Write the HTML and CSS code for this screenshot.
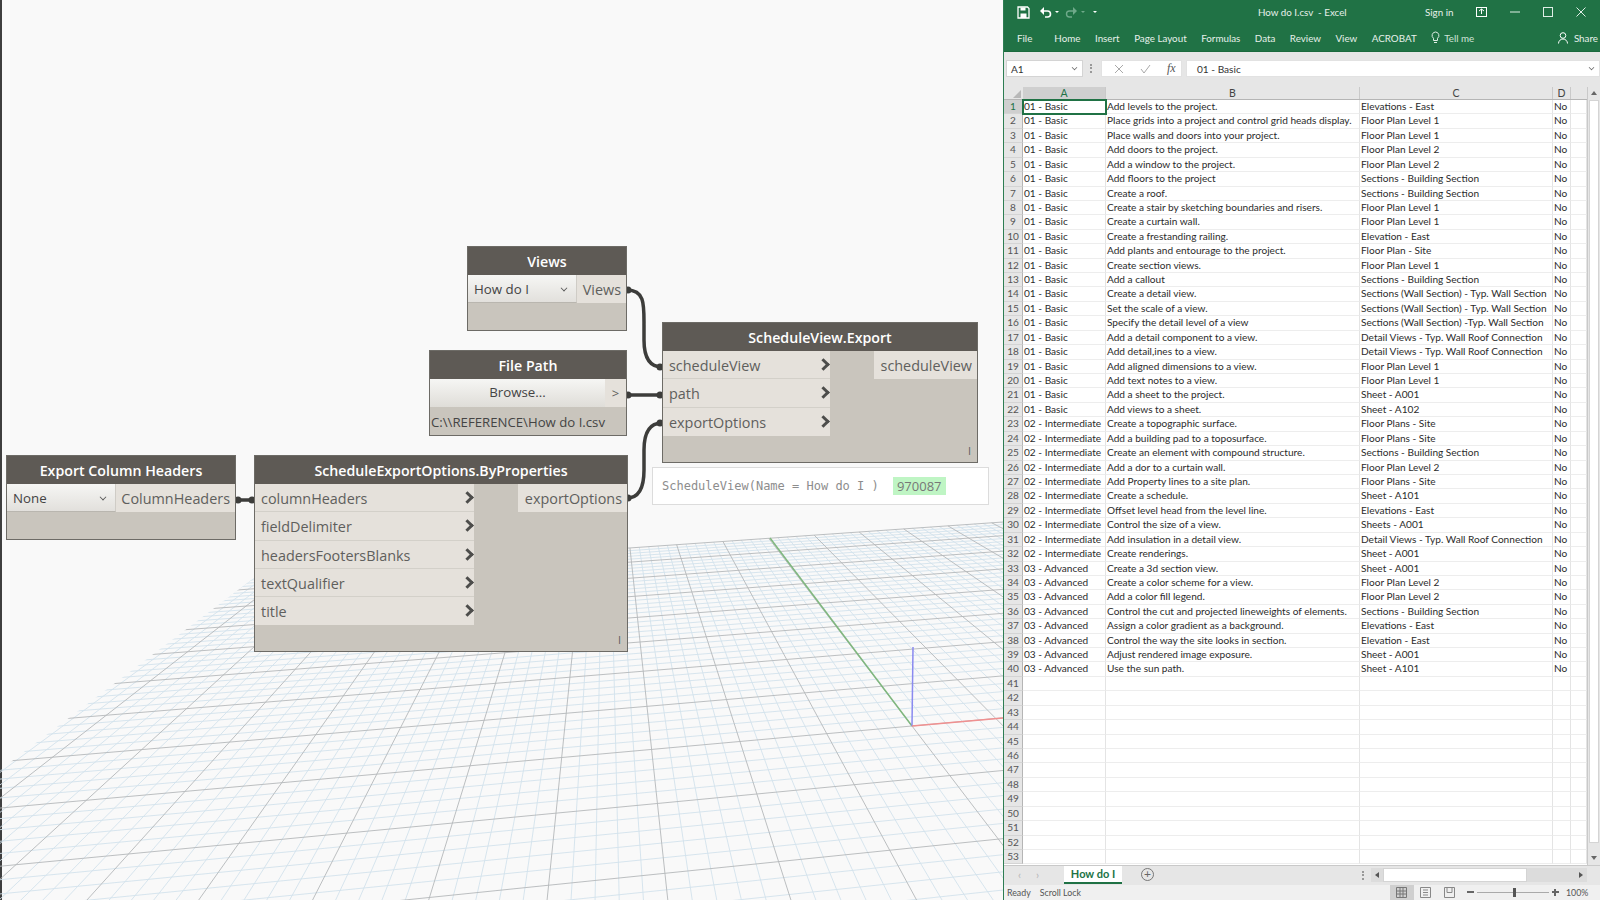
FILE: index.html
```html
<!DOCTYPE html>
<html>
<head>
    <title>Dynamo and Excel</title>
    <link rel="stylesheet" href="styles.css">
</head>
<body>
    <div class="canvas">
        <!-- Background grid, filled in by script.js -->
        <svg class="floor" id="floor" width="1003" height="900"></svg>

        <!-- Wires between the nodes -->
        <svg class="wires" width="1003" height="900">
            <path d="M627 290 C 645 290, 644 305, 644 325 L 644 340 C 644 358, 650 367, 662 367"/>
            <path d="M627 395 L 662 395"/>
            <path d="M627 498 C 640 498, 644 485, 644 470 L 644 450 C 644 432, 650 423, 662 423"/>
            <path d="M236 500 L 254 500"/>
            <circle cx="628" cy="290" r="3.500"/>
            <circle cx="660" cy="367" r="3.500"/>
            <circle cx="628" cy="395" r="3.500"/>
            <circle cx="660" cy="395" r="3.500"/>
            <circle cx="628" cy="498" r="3.500"/>
            <circle cx="660" cy="423" r="3.500"/>
            <circle cx="238" cy="500" r="3.500"/>
            <circle cx="252" cy="500" r="3.500"/>
        </svg>

        <!-- Views -->
        <div class="node node-views">
            <div class="node-title">Views</div>
            <div class="node-row">
                <div class="dropdown dropdown-views">How do I <span class="caret"></span></div>
                <div class="output output-fill">Views</div>
            </div>
        </div>

        <!-- File Path -->
        <div class="node node-path">
            <div class="node-title">File Path</div>
            <div class="node-row">
                <div class="browse">Browse...</div>
                <div class="browse-out">&gt;</div>
            </div>
            <div class="path-text">C:\\REFERENCE\How do I.csv</div>
        </div>

        <!-- ScheduleView.Export -->
        <div class="node node-export">
            <div class="node-title">ScheduleView.Export</div>
            <div class="node-body">
                <div class="inputs">
                    <div class="input">scheduleView <span class="chevron"></span></div>
                    <div class="input">path <span class="chevron"></span></div>
                    <div class="input">exportOptions <span class="chevron"></span></div>
                </div>
                <div class="output output-right">scheduleView</div>
            </div>
            <div class="lacing">I</div>
        </div>

        <div class="preview">
            <span class="preview-text">ScheduleView(Name = How do I )</span>
            <span class="preview-id">970087</span>
        </div>

        <!-- Export Column Headers -->
        <div class="node node-headers">
            <div class="node-title">Export Column Headers</div>
            <div class="node-row">
                <div class="dropdown dropdown-headers">None <span class="caret"></span></div>
                <div class="output output-fill">ColumnHeaders</div>
            </div>
        </div>

        <!-- ScheduleExportOptions.ByProperties -->
        <div class="node node-options">
            <div class="node-title">ScheduleExportOptions.ByProperties</div>
            <div class="node-body">
                <div class="inputs">
                    <div class="input">columnHeaders <span class="chevron"></span></div>
                    <div class="input">fieldDelimiter <span class="chevron"></span></div>
                    <div class="input">headersFootersBlanks <span class="chevron"></span></div>
                    <div class="input">textQualifier <span class="chevron"></span></div>
                    <div class="input">title <span class="chevron"></span></div>
                </div>
                <div class="output output-right">exportOptions</div>
            </div>
            <div class="lacing">I</div>
        </div>
    </div>

    <div class="excel">
        <div class="titlebar">
            <div class="qat">
                <svg width="13" height="13" viewBox="0 0 13 13"><path d="M1 1h9.5L12 2.5V12H1z" fill="none" stroke="#fff" stroke-width="1.3"/><path d="M3.5 1.5h5v3h-5zM3.5 7.5h6V12h-6z" fill="#fff"/></svg>
                <svg class="undo" width="13" height="12" viewBox="0 0 13 12"><path d="M3 5h5.5a3 3 0 0 1 0 6H6" fill="none" stroke="#fff" stroke-width="1.6"/><path d="M1 5l4-4v8z" fill="#fff"/></svg>
                <span class="tiny-caret"></span>
                <svg class="redo" width="13" height="12" viewBox="0 0 13 12"><path d="M10 5H4.5a3 3 0 0 0 0 6H7" fill="none" stroke="#6fa98a" stroke-width="1.4"/><path d="M12 5L8 1v8z" fill="#6fa98a"/></svg>
                <span class="tiny-caret dim"></span>
                <span class="tiny-caret more"></span>
            </div>
            <div class="doc-title">How do I.csv &nbsp;- Excel</div>
            <div class="signin">Sign in</div>
            <div class="win-btns">
                <svg width="11" height="10" viewBox="0 0 11 10"><rect x=".5" y=".5" width="10" height="9" fill="none" stroke="#fff"/><path d="M3 4l2.5-2L8 4M5.500 2v5" stroke="#fff" fill="none"/></svg>
                <svg width="10" height="10" viewBox="0 0 10 10"><path d="M0 5h10" stroke="#dfeee6"/></svg>
                <svg width="10" height="10" viewBox="0 0 10 10"><rect x=".5" y=".5" width="9" height="9" fill="none" stroke="#dfeee6"/></svg>
                <svg width="10" height="10" viewBox="0 0 10 10"><path d="M.5.500l9 9M9.500.500l-9 9" stroke="#dfeee6"/></svg>
            </div>
        </div>
        <div class="ribbon">
            <span class="tab tab-file">File</span>
            <span class="tab">Home</span>
            <span class="tab">Insert</span>
            <span class="tab">Page Layout</span>
            <span class="tab">Formulas</span>
            <span class="tab">Data</span>
            <span class="tab">Review</span>
            <span class="tab">View</span>
            <span class="tab">ACROBAT</span>
            <span class="tab tab-tell">
                <svg width="9" height="13" viewBox="0 0 9 13"><path d="M4.500 1a3.500 3.500 0 0 0-2 6.300V9.500h4V7.300a3.500 3.500 0 0 0-2-6.300zM3 11.500h3" fill="none" stroke="#dfeee6"/></svg>
                Tell me
            </span>
            <span class="tab tab-share">
                <svg width="11" height="12" viewBox="0 0 11 12"><circle cx="5" cy="3.500" r="2.800" fill="none" stroke="#fff"/><path d="M.5 11.500a4.500 4.500 0 0 1 9 0" fill="none" stroke="#fff"/></svg>
                Share
            </span>
        </div>
        <div class="formula-bar">
            <div class="name-box">A1 <span class="caret caret-small"></span></div>
            <div class="bar-dots"></div>
            <div class="fx-box">
                <svg width="10" height="10" viewBox="0 0 10 10"><path d="M1 1l8 8M9 1l-8 8" stroke="#a9a9a9"/></svg>
                <svg width="11" height="10" viewBox="0 0 11 10"><path d="M1 5l3 4 6-8" fill="none" stroke="#a9a9a9"/></svg>
                <span class="fx">fx</span>
            </div>
            <div class="formula-input">01 - Basic <span class="caret caret-small"></span></div>
        </div>
        <div class="sheet">
            <div class="sheet-grid">
                <div class="sheet-row sheet-head">
                    <div class="corner"><span class="corner-mark"></span></div>
                    <div class="col-head col-active">A</div>
                    <div class="col-head">B</div>
                    <div class="col-head">C</div>
                    <div class="col-head">D</div>
                    <div class="col-head col-empty"></div>
                </div>
                <div id="rows"></div>
            </div>
            <div class="vscroll">
                <span class="arrow arrow-up"></span>
                <div class="vthumb"></div>
                <span class="arrow arrow-down"></span>
            </div>
        </div>
        <div class="tabstrip">
            <span class="sheet-nav">&lsaquo;</span>
            <span class="sheet-nav">&rsaquo;</span>
            <div class="sheet-tab">How do I</div>
            <div class="add-sheet">+</div>
            <div class="strip-dots"></div>
            <div class="hscroll">
                <span class="arrow arrow-left"></span>
                <div class="hthumb"></div>
                <span class="arrow arrow-right"></span>
            </div>
        </div>
        <div class="statusbar">
            <span class="status-ready">Ready</span>
            <span class="status-lock">Scroll Lock</span>
            <div class="view-btn view-active">
                <svg width="11" height="11" viewBox="0 0 11 11"><path d="M.5.500h10v10H.500zM.5 4h10M.5 7h10M4 .500v10M7 .500v10" fill="none" stroke="#777"/></svg>
            </div>
            <div class="view-btn">
                <svg width="11" height="11" viewBox="0 0 11 11"><path d="M.5.500h10v10H.500zM3 3h5M3 5.500h5M3 8h5" fill="none" stroke="#888"/></svg>
            </div>
            <div class="view-btn">
                <svg width="11" height="11" viewBox="0 0 11 11"><path d="M.5.500h10v10H.500zM3 .500v5h5v-5" fill="none" stroke="#888"/></svg>
            </div>
            <div class="zoom-slider">
                <span class="zoom-minus"></span>
                <span class="zoom-line"><span class="zoom-thumb"></span></span>
                <span class="zoom-plus"></span>
            </div>
            <span class="zoom-pct">100%</span>
        </div>
    </div>
    <script src="script.js"></script>
</body>
</html>
```

FILE: styles.css
```css
* {
    box-sizing: border-box;
}
body {
    margin: 0;
    width: 1600px;
    height: 900px;
    overflow: hidden;
    display: flex;
    font-family: "Open Sans", sans-serif;
    background-color: #f9f9f9;
}

/* Dynamo side */
.canvas {
    position: relative;
    width: 1003px;
    height: 900px;
    background-color: #f9f9f9;
    border-left: 2px solid #3f3f3f;
}
.floor, .wires {
    position: absolute;
    left: -2px;
    top: 0;
}
.wires path {
    fill: none;
    stroke: #3d3d3b;
    stroke-width: 3.5;
}
.wires circle {
    fill: #3d3d3b;
}
.node {
    position: absolute;
    background-color: #c9c5bd;
    border: 1px solid #6d6b66;
    color: #5f5f5d;
    font-size: 14.400px;
}
.node-title {
    height: 28px;
    background-color: #5e5a55;
    color: #fff;
    font-weight: 600;
    font-size: 14.200px;
    line-height: 30px;
    text-align: center;
}
.node-row {
    display: flex;
    height: 28px;
}
.node-body {
    display: flex;
    justify-content: space-between;
    align-items: flex-start;
}
.node-views {
    left: 465px;
    top: 246px;
    width: 160px;
    height: 85px;
}
.node-path {
    left: 427px;
    top: 350px;
    width: 198px;
    height: 86px;
}
.node-export {
    left: 660px;
    top: 322px;
    width: 316px;
    height: 141px;
}
.node-headers {
    left: 4px;
    top: 455px;
    width: 230px;
    height: 85px;
}
.node-options {
    left: 252px;
    top: 455px;
    width: 374px;
    height: 197px;
}
.dropdown {
    position: relative;
    padding-left: 6px;
    line-height: 28px;
    color: #444;
    font-size: 13.300px;
    background: linear-gradient(#f6f6f4, #e2e0dc);
    border-right: 1px solid #cfccc6;
    border-bottom: 1px solid #b9b6af;
}
.dropdown-views {
    width: 109px;
}
.dropdown-headers {
    width: 109px;
}
.caret {
    position: absolute;
    right: 9px;
    top: 10px;
    width: 6px;
    height: 6px;
    border-right: 1.300px solid #555;
    border-bottom: 1.300px solid #555;
    transform: rotate(45deg) scale(.8);
}
.output {
    height: 28px;
    line-height: 30px;
    background-color: #e5e1db;
    text-align: right;
    padding-right: 5px;
    white-space: nowrap;
}
.output-fill {
    flex: 1;
}
.output-right {
    padding-left: 7px;
}
.browse {
    width: 175px;
    text-align: center;
    line-height: 26px;
    color: #444;
    font-size: 13.300px;
    background: linear-gradient(#f6f6f4, #dfddd8);
}
.browse-out {
    flex: 1;
    text-align: center;
    line-height: 28px;
    font-size: 13px;
    background-color: #e5e1db;
}
.path-text {
    padding-left: 1px;
    line-height: 30px;
    font-size: 13.200px;
    color: #444;
    white-space: nowrap;
}
.inputs {
    width: 167px;
    flex-shrink: 0;
}
.node-options .inputs {
    width: 219px;
}
.input {
    position: relative;
    height: 28.300px;
    line-height: 30px;
    padding-left: 6px;
    background-color: #e5e1db;
    border-bottom: 1px solid #d3d0c9;
}
.input:last-child {
    border-bottom: none;
}
.chevron {
    position: absolute;
    right: 2px;
    top: 9px;
    width: 9px;
    height: 9px;
    border-top: 3px solid #4d4d4b;
    border-right: 3px solid #4d4d4b;
    transform: rotate(45deg);
}
.lacing {
    position: absolute;
    right: 6px;
    bottom: 4px;
    font-size: 11px;
    line-height: 14px;
}
.preview {
    position: absolute;
    left: 650px;
    top: 467px;
    width: 337px;
    height: 38px;
    display: flex;
    align-items: center;
    padding-left: 9px;
    background-color: #fff;
    border: 1px solid #dcdcdc;
}
.preview-text {
    font-family: "DejaVu Sans Mono", monospace;
    font-size: 12px;
    color: #8d8d8d;
    white-space: nowrap;
}
.preview-id {
    margin-left: 14px;
    width: 53px;
    height: 18px;
    line-height: 18px;
    text-align: center;
    font-size: 13px;
    color: #777;
    background-color: #bff5c4;
}

/* Excel side */
.excel {
    width: 597px;
    height: 900px;
    display: flex;
    flex-direction: column;
    background-color: #e6e6e6;
    border-left: 1px solid #2d7d53;
    font-family: Lato, sans-serif;
    color: #333;
}
.titlebar {
    position: relative;
    display: flex;
    align-items: center;
    height: 24px;
    background-color: #207245;
    color: #e6f0ea;
    font-size: 9.800px;
}
.qat {
    display: flex;
    align-items: center;
    padding-left: 13px;
}
.undo {
    margin-left: 9px;
}
.redo {
    margin-left: 6px;
}
.tiny-caret {
    margin-left: 3px;
    border-left: 2px solid transparent;
    border-right: 2px solid transparent;
    border-top: 2px solid #fff;
}
.tiny-caret.dim {
    border-top-color: #6fa98a;
}
.tiny-caret.more {
    margin-left: 8px;
}
.doc-title {
    position: absolute;
    left: 254px;
    white-space: nowrap;
}
.signin {
    position: absolute;
    left: 421px;
}
.win-btns {
    position: absolute;
    left: 472px;
    top: 7px;
    display: flex;
    gap: 23px;
}
.ribbon {
    display: flex;
    align-items: center;
    gap: 14.500px;
    height: 28px;
    padding-left: 13px;
    background-color: #207245;
    border-bottom: 1px solid #1b6a3e;
    color: #e6f0ea;
    font-size: 9.800px;
    white-space: nowrap;
}
.tab-file {
    margin-right: 7.500px;
}
.tab-tell {
    display: flex;
    align-items: center;
    gap: 4px;
    color: #cfe2d7;
}
.tab-share {
    display: flex;
    align-items: center;
    gap: 5px;
    margin-left: auto;
    margin-right: 2px;
}
.formula-bar {
    position: relative;
    display: flex;
    align-items: flex-start;
    height: 35px;
    padding-top: 8px;
}
.name-box {
    position: relative;
    margin-left: 2px;
    width: 77px;
    height: 17px;
    padding-left: 4px;
    line-height: 17px;
    font-size: 10.100px;
    background-color: #fff;
    border: 1px solid #d4d4d4;
}
.caret-small {
    right: 5px;
    top: 4px;
    width: 5px;
    height: 5px;
    border-color: #666;
}
.bar-dots {
    width: 2px;
    height: 9px;
    margin: 4px 9px 0 7px;
    border-left: 2px dotted #999;
}
.fx-box {
    display: flex;
    align-items: center;
    gap: 16px;
    width: 81px;
    height: 17px;
    padding-left: 12px;
    background-color: #fff;
    border: 1px solid #e2e2e2;
}
.fx {
    font-family: "Liberation Serif", serif;
    font-style: italic;
    font-size: 12px;
    color: #555;
}
.formula-input {
    position: relative;
    flex: 1;
    height: 17px;
    margin-left: 4px;
    padding-left: 10px;
    line-height: 17px;
    font-size: 10.100px;
    background-color: #fff;
    border: 1px solid #e2e2e2;
}
.sheet {
    display: flex;
    height: 777.500px;
}
.sheet-grid {
    width: 583px;
    background-color: #fff;
}
.sheet-row {
    display: grid;
    grid-template-columns: 19px 83px 254px 193px 18px 16px;
    height: 14.430px;
}
.sheet-head {
    height: 13px;
    background-color: #e6e6e6;
    border-bottom: 1px solid #b5b5b5;
}
.corner {
    position: relative;
}
.corner-mark {
    position: absolute;
    right: 2px;
    bottom: 1px;
    border-left: 8px solid transparent;
    border-bottom: 8px solid #b8b8b8;
}
.col-head {
    text-align: center;
    font-size: 10.500px;
    line-height: 12px;
    color: #444;
    border-right: 1px solid #c9c9c9;
}
.col-active {
    background-color: #cfcfcf;
    color: #207245;
}
.col-empty {
    border-right: none;
}
.cell {
    padding-left: 1px;
    font-size: 10.100px;
    line-height: 13px;
    color: #2b2b2b;
    white-space: nowrap;
    overflow: hidden;
    border-right: 1px solid #e4e4e4;
    border-bottom: 1px solid #ededed;
}
.row-num {
    padding: 0;
    text-align: center;
    color: #555;
    background-color: #e6e6e6;
    border-right: 1px solid #b5b5b5;
    border-bottom: 1px solid #d4d4d4;
}
.row-num.active {
    background-color: #cfcfcf;
    color: #207245;
}
.cell.selected {
    position: relative;
    overflow: visible;
    outline: 2px solid #207245;
    outline-offset: -1px;
}
.vscroll {
    position: relative;
    flex: 1;
    background-color: #e6e6e6;
    border-left: 1px solid #c9c9c9;
}
.vthumb {
    position: absolute;
    left: 1px;
    right: 1px;
    top: 13px;
    height: 743px;
    background-color: #fff;
    border: 1px solid #d4d4d4;
}
.arrow {
    position: absolute;
    width: 0;
    height: 0;
}
.arrow-up {
    left: 3px;
    top: 4px;
    border-left: 3px solid transparent;
    border-right: 3px solid transparent;
    border-bottom: 4px solid #666;
}
.arrow-down {
    left: 3px;
    bottom: 5px;
    border-left: 3px solid transparent;
    border-right: 3px solid transparent;
    border-top: 4px solid #666;
}
.tabstrip {
    position: relative;
    display: flex;
    align-items: flex-start;
    height: 20px;
    padding-left: 14px;
    background-color: #e6e6e6;
    border-top: 1px solid #c9c9c9;
}
.sheet-nav {
    width: 18px;
    line-height: 18px;
    font-size: 11px;
    color: #b5b5b5;
}
.sheet-tab {
    margin-left: 10px;
    width: 58px;
    height: 18px;
    line-height: 16px;
    text-align: center;
    font-size: 11px;
    font-weight: 700;
    color: #207245;
    background-color: #fff;
    border-bottom: 2px solid #207245;
}
.add-sheet {
    width: 13px;
    height: 13px;
    margin: 2px 0 0 19px;
    line-height: 10px;
    text-align: center;
    font-size: 12px;
    color: #666;
    border: 1px solid #777;
    border-radius: 50%;
}
.strip-dots {
    position: absolute;
    left: 358px;
    top: 5px;
    height: 9px;
    border-left: 2px dotted #999;
}
.hscroll {
    position: absolute;
    left: 367px;
    top: 2px;
    width: 216px;
    height: 14px;
    background-color: #dcdcdc;
}
.hthumb {
    position: absolute;
    left: 12px;
    top: 0;
    width: 144px;
    height: 14px;
    background-color: #fff;
    border: 1px solid #d4d4d4;
}
.arrow-left {
    left: 4px;
    top: 4px;
    border-top: 3px solid transparent;
    border-bottom: 3px solid transparent;
    border-right: 4px solid #555;
}
.arrow-right {
    right: 4px;
    top: 4px;
    border-top: 3px solid transparent;
    border-bottom: 3px solid transparent;
    border-left: 4px solid #555;
}
.statusbar {
    position: relative;
    display: flex;
    align-items: center;
    flex: 1;
    padding-left: 3px;
    background-color: #f0f0f0;
    font-size: 8.800px;
    color: #555;
}
.status-lock {
    margin-left: 9px;
}
.status-ready {
    margin-left: 0;
}
.view-btn {
    display: flex;
    align-items: center;
    justify-content: center;
    width: 24px;
    height: 100%;
}
.view-active {
    margin-left: 309px;
    background-color: #cfcfcf;
}
.zoom-slider {
    display: flex;
    align-items: center;
    width: 92px;
    margin-left: 5px;
}
.zoom-minus, .zoom-plus {
    position: relative;
    width: 7px;
    height: 2px;
    background-color: #666;
}
.zoom-plus::after {
    content: "";
    position: absolute;
    left: 2.500px;
    top: -2.500px;
    width: 2px;
    height: 7px;
    background-color: #666;
}
.zoom-line {
    position: relative;
    flex: 1;
    height: 1px;
    margin: 0 3px;
    background-color: #aaa;
}
.zoom-thumb {
    position: absolute;
    left: 36px;
    top: -4px;
    width: 3px;
    height: 9px;
    background-color: #555;
}
.zoom-pct {
    margin-left: 7px;
}
```

FILE: script.js
```js
// Floor grid: a plane seen in perspective, from two vanishing points and the origin
var ns = 'http://www.w3.org/2000/svg';
var svg = document.getElementById('floor');
var vpDepth = [606, 325];
var vpSide = [10571, -143];
var origin = [912, 726];
var a = 0.00875, b = 0.11, vMax = 8;

function project(u, v) {
    var w = a * u + b * v + 1;
    return [
        (a * u * vpSide[0] + b * v * vpDepth[0] + origin[0]) / w,
        (a * u * vpSide[1] + b * v * vpDepth[1] + origin[1]) / w
    ];
}

function addLine(p, q, color, width, parent) {
    var l = document.createElementNS(ns, 'line');
    l.setAttribute('x1', p[0]);
    l.setAttribute('y1', p[1]);
    l.setAttribute('x2', q[0]);
    l.setAttribute('y2', q[1]);
    l.setAttribute('stroke', color);
    l.setAttribute('stroke-width', width);
    (parent || svg).appendChild(l);
}

var clip = document.createElementNS(ns, 'clipPath');
clip.id = 'floor-clip';
var poly = document.createElementNS(ns, 'polygon');
poly.setAttribute('points', '0,770 270,566 1003,516 1003,900 0,900');
clip.appendChild(poly);
var defs = document.createElementNS(ns, 'defs');
defs.appendChild(clip);
svg.appendChild(defs);
var group = document.createElementNS(ns, 'g');
group.setAttribute('clip-path', 'url(#floor-clip)');
svg.appendChild(group);

// minor lines first, major lines on top
[false, true].forEach(function (major) {
    var color = major ? '#b4b8ba' : '#d2e2ec';
    var width = 0.9;
    for (var i = -400; i <= 200; i++) {
        if ((i % 5 === 0) !== major) continue;
        var p = project(i / 5, vMax);
        if (p[0] < 200 || p[0] > 1100) continue;
        var q = [p[0] + (p[0] - vpDepth[0]) * 4, p[1] + (p[1] - vpDepth[1]) * 4];
        addLine(p, q, color, width, group);
    }
    for (var j = vMax * 5; j >= -20; j--) {
        if ((j % 5 === 0) !== major) continue;
        var s = project(0, j / 5);
        var k = 1500 / (vpSide[0] - s[0]);
        var dy = (vpSide[1] - s[1]) * k;
        addLine([s[0] - 1500, s[1] - dy], [s[0] + 1500, s[1] + dy], color, width, group);
    }
});

// Axes
addLine(origin, [770, 538], '#7fb77e', 1.5);
addLine(origin, [913, 647], '#8a8af0', 1.5);
addLine(origin, [1003, 718], '#f09090', 1.5);

// Spreadsheet rows: [category index, task, view]
var B = '01 - Basic', I = '02 - Intermediate', A = '03 - Advanced';
var data = [
    [B, 'Add levels to the project.', 'Elevations - East'],
    [B, 'Place grids into a project and control grid heads display.', 'Floor Plan Level 1'],
    [B, 'Place walls and doors into your project.', 'Floor Plan Level 1'],
    [B, 'Add doors to the project.', 'Floor Plan Level 2'],
    [B, 'Add a window to the project.', 'Floor Plan Level 2'],
    [B, 'Add floors to the project', 'Sections - Building Section'],
    [B, 'Create a roof.', 'Sections - Building Section'],
    [B, 'Create a stair by sketching boundaries and risers.', 'Floor Plan Level 1'],
    [B, 'Create a curtain wall.', 'Floor Plan Level 1'],
    [B, 'Create a frestanding railing.', 'Elevation - East'],
    [B, 'Add plants and entourage to the project.', 'Floor Plan - Site'],
    [B, 'Create section views.', 'Floor Plan Level 1'],
    [B, 'Add a callout', 'Sections - Building Section'],
    [B, 'Create a detail view.', 'Sections (Wall Section) - Typ. Wall Section'],
    [B, 'Set the scale of a view.', 'Sections (Wall Section) - Typ. Wall Section'],
    [B, 'Specify the detail level of a view', 'Sections (Wall Section) -Typ. Wall Section'],
    [B, 'Add a detail component to a view.', 'Detail Views - Typ. Wall Roof Connection'],
    [B, 'Add detail,ines to a view.', 'Detail Views - Typ. Wall Roof Connection'],
    [B, 'Add aligned dimensions to a view.', 'Floor Plan Level 1'],
    [B, 'Add text notes to a view.', 'Floor Plan Level 1'],
    [B, 'Add a sheet to the project.', 'Sheet - A001'],
    [B, 'Add views to a sheet.', 'Sheet - A102'],
    [I, 'Create a topographic surface.', 'Floor Plans - Site'],
    [I, 'Add a building pad to a toposurface.', 'Floor Plans - Site'],
    [I, 'Create an element with compound structure.', 'Sections - Building Section'],
    [I, 'Add a dor to a curtain wall.', 'Floor Plan Level 2'],
    [I, 'Add Property lines to a site plan.', 'Floor Plans - Site'],
    [I, 'Create a schedule.', 'Sheet - A101'],
    [I, 'Offset level head from the level line.', 'Elevations - East'],
    [I, 'Control the size of a view.', 'Sheets - A001'],
    [I, 'Add insulation in a detail view.', 'Detail Views - Typ. Wall Roof Connection'],
    [I, 'Create renderings.', 'Sheet - A001'],
    [A, 'Create a 3d section view.', 'Sheet - A001'],
    [A, 'Create a color scheme for a view.', 'Floor Plan Level 2'],
    [A, 'Add a color fill legend.', 'Floor Plan Level 2'],
    [A, 'Control the cut and projected lineweights of elements.', 'Sections - Building Section'],
    [A, 'Assign a color gradient as a background.', 'Elevations - East'],
    [A, 'Control the way the site looks in section.', 'Elevation - East'],
    [A, 'Adjust rendered image exposure.', 'Sheet - A001'],
    [A, 'Use the sun path.', 'Sheet - A101']
];

var rows = document.getElementById('rows');
for (var r = 0; r < 53; r++) {
    var row = document.createElement('div');
    row.className = 'sheet-row';
    var d = data[r];
    var vals = [r + 1, d ? d[0] : '', d ? d[1] : '', d ? d[2] : '', d ? 'No' : '', ''];
    vals.forEach(function (val, c) {
        var cell = document.createElement('div');
        cell.className = 'cell';
        if (c === 0) cell.className += ' row-num' + (r === 0 ? ' active' : '');
        if (c === 1 && r === 0) cell.className += ' selected';
        cell.textContent = val;
        row.appendChild(cell);
    });
    rows.appendChild(row);
}
```
